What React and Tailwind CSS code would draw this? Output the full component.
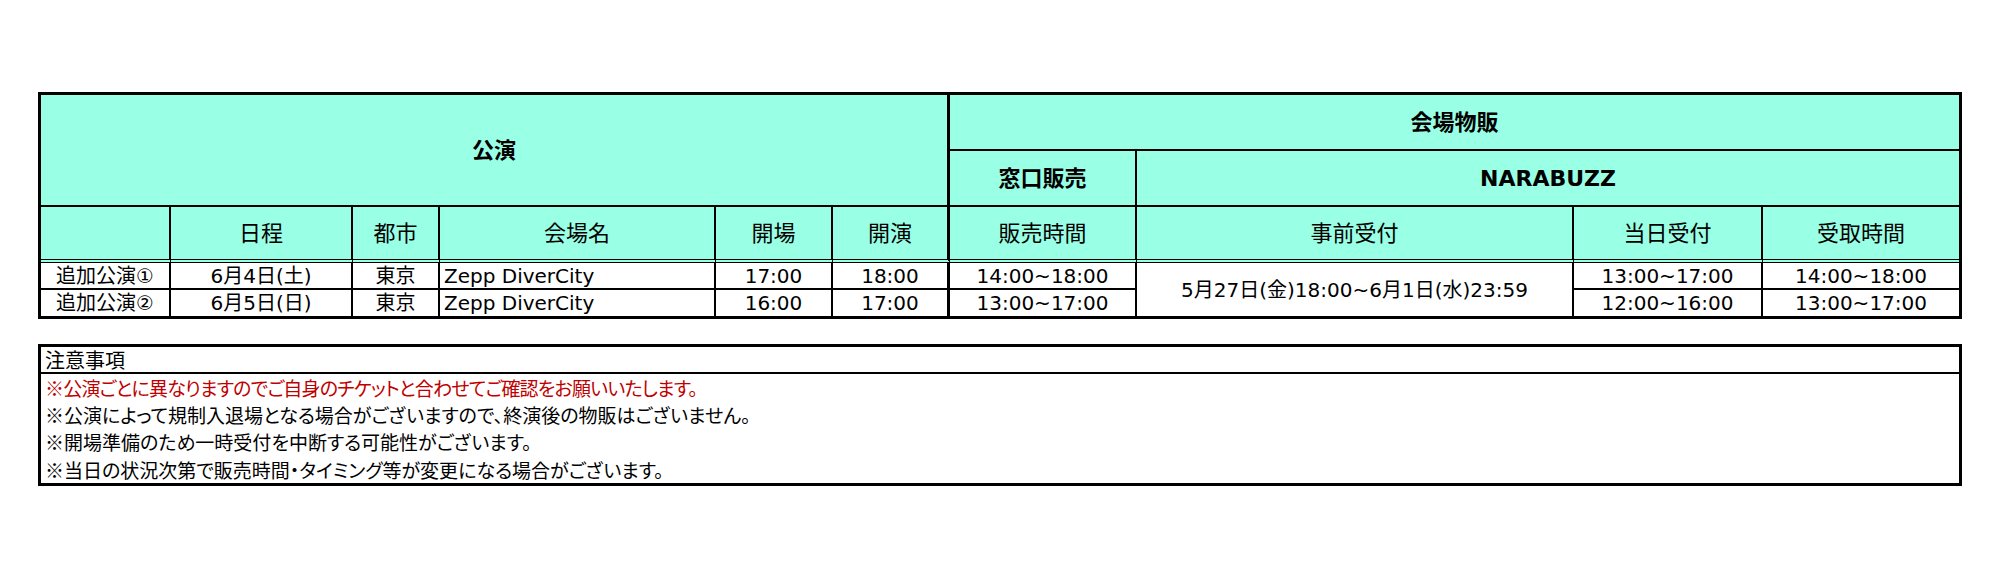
import React from 'react';

// 公演スケジュール表 + 注意事項
const HEAD = 'bg-[#99ffe5] flex items-center justify-center text-[22px] border-black';
const CELL = 'bg-white flex items-center justify-center text-[20px] leading-none border-black';

const rows = [
  { name: '追加公演①', date: '6月4日(土)', city: '東京', venue: 'Zepp DiverCity', open: '17:00', start: '18:00', window: '14:00~18:00', day: '13:00~17:00', pickup: '14:00~18:00' },
  { name: '追加公演②', date: '6月5日(日)', city: '東京', venue: 'Zepp DiverCity', open: '16:00', start: '17:00', window: '13:00~17:00', day: '12:00~16:00', pickup: '13:00~17:00' },
];

const notes = [
  { text: '※公演ごとに異なりますのでご自身のチケットと合わせてご確認をお願いいたします。', red: true },
  { text: '※公演によって規制入退場となる場合がございますので、終演後の物販はございません。' },
  { text: '※開場準備のため一時受付を中断する可能性がございます。' },
  { text: '※当日の状況次第で販売時間・タイミング等が変更になる場合がございます。' },
];

const ScheduleTable = () => {
  const headBottom = `${HEAD} border-b-4 [border-bottom-style:double]`;
  return (
    <div className="w-[1924px] border-[3px] border-black grid grid-cols-[130px_182px_87px_276px_117px_117px_187px_437px_189px_196px] grid-rows-[56px_56px_56px_27px_26px]">
      {/* ヘッダー上段 */}
      <div className={`${HEAD} col-span-6 row-span-2 border-r-[3px] border-b-2 font-bold`}>公演</div>
      <div className={`${HEAD} col-span-4 border-b-2 font-bold`}>会場物販</div>
      <div className={`${HEAD} border-r-2 border-b-2 font-bold`}>窓口販売</div>
      <div className={`${HEAD} col-span-3 border-b-2 font-bold`}>NARABUZZ</div>

      {/* 列見出し */}
      <div className={`${headBottom} border-r-2`}></div>
      <div className={`${headBottom} border-r-2`}>日程</div>
      <div className={`${headBottom} border-r-2`}>都市</div>
      <div className={`${headBottom} border-r-2`}>会場名</div>
      <div className={`${headBottom} border-r-2`}>開場</div>
      <div className={`${headBottom} border-r-[3px]`}>開演</div>
      <div className={`${headBottom} border-r-2`}>販売時間</div>
      <div className={`${headBottom} border-r-2`}>事前受付</div>
      <div className={`${headBottom} border-r-2`}>当日受付</div>
      <div className={headBottom}>受取時間</div>

      {rows.map((r, i) => {
        const b = i === 0 ? 'border-b-2' : '';
        return (
          <React.Fragment key={r.name}>
            <div className={`${CELL} ${b} border-r-2`}>{r.name}</div>
            <div className={`${CELL} ${b} border-r-2`}>{r.date}</div>
            <div className={`${CELL} ${b} border-r-2`}>{r.city}</div>
            <div className={`${CELL} ${b} border-r-2 !justify-start pl-1`}>{r.venue}</div>
            <div className={`${CELL} ${b} border-r-2`}>{r.open}</div>
            <div className={`${CELL} ${b} border-r-[3px]`}>{r.start}</div>
            <div className={`${CELL} ${b} border-r-2`}>{r.window}</div>
            {i === 0 && (
              <div className={`${CELL} row-span-2 border-r-2`}>5月27日(金)18:00~6月1日(水)23:59</div>
            )}
            <div className={`${CELL} ${b} border-r-2`}>{r.day}</div>
            <div className={`${CELL} ${b}`}>{r.pickup}</div>
          </React.Fragment>
        );
      })}
    </div>
  );
};

const Notes = () => (
  <div className="w-[1924px] border-[3px] border-black font-['Noto_Sans_CJK_JP',sans-serif] [font-feature-settings:'palt'] text-[19px] leading-none">
    <div className="h-[27px] border-b-2 border-black flex items-center pl-1 text-[20px]">注意事項</div>
    {notes.map((n, i) => (
      <div
        key={i}
        className={`${i === notes.length - 1 ? 'h-[28px]' : 'h-[27px]'} flex items-center pl-1 ${n.red ? 'text-[#c00000] tracking-[-0.8px]' : 'text-black'}`}
      >
        {n.text}
      </div>
    ))}
  </div>
);

export default function App() {
  return (
    <div className="w-[2000px] h-[578px] bg-white text-black pt-[92px] pl-[38px] font-['DejaVu_Sans','Noto_Sans_CJK_JP',sans-serif]">
      <ScheduleTable />
      <div className="mt-[25px]">
        <Notes />
      </div>
    </div>
  );
}
